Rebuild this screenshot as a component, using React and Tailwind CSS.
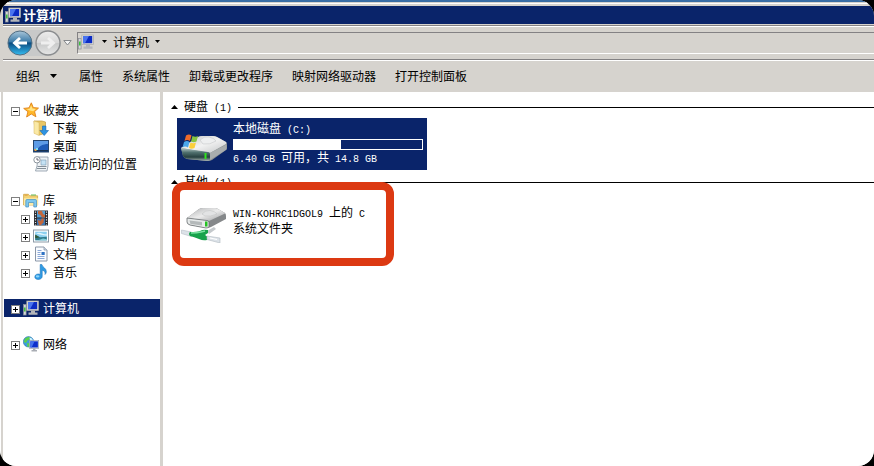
import { useState } from "react";

const ComputerIcon = () => (
  <svg viewBox="0 0 16 16" className="size-4 shrink-0">
    <rect x="0.5" y="4.5" width="2.600" height="10.500" fill="#d3d6d9" stroke="#8b8f96" strokeWidth="0.7" />
    <rect x="1" y="7.5" width="1.600" height="4" fill="#3fbf3f" />
    <rect x="3.800" y="1" width="11.700" height="9.5" fill="#dcdcd4" stroke="#a8aaa8" strokeWidth="0.7" />
    <rect x="5" y="2" width="9.2" height="7.2" fill="#0c2cc4" />
    <path d="M5 2h6L7 9.2H5z" fill="#4a74ee" />
    <path d="M8 10.5h4v2h2.5v2.300h-9V12.500H8z" fill="#b4b6ba" />
  </svg>
);

const StarIcon = () => (
  <svg viewBox="0 0 16 16" className="size-4 shrink-0">
    <path
      d="M8.3 0.8l2 4.8 5.2.5-3.9 3.5 1.3 5.2-4.6-2.8-4.7 3 1.3-5.3L.7 6.4l5.4-.6z"
      fill="#ffb82a"
      stroke="#e0821c"
      strokeWidth="0.9"
    />
    <path d="M8.1 3.2l1.3 3.3 3.4.4-2.6 2.3-3.4-.7-3.3-1.4 3.2-.4z" fill="#ffe487" />
  </svg>
);

const DownloadIcon = () => (
  <svg viewBox="0 0 16 16" className="size-4 shrink-0">
    <path d="M1 1h8l3.500 1v11l-6 2-4-2z" fill="#e8c666" stroke="#c39b3c" strokeWidth="0.7" />
    <path d="M1 1l5 1.500v13L1 13.3z" fill="#fae9a6" stroke="#d6b55c" strokeWidth="0.5" />
    <path d="M9.5 6h3.4v4.500h2.6l-4.3 5-4.3-5h2.6z" fill="#2e94e2" stroke="#1768b4" strokeWidth="0.6" />
  </svg>
);

const DesktopIcon = () => (
  <svg viewBox="0 0 16 16" className="size-4 shrink-0">
    <rect x="0.5" y="2.5" width="15" height="11.500" fill="#1f5cb8" stroke="#26466f" />
    <path d="M1 3h14v3C10 6 6 8 4 12H1z" fill="#5d9be6" />
    <rect x="1" y="12" width="14" height="1.5" fill="#18314f" />
    <rect x="1.5" y="11" width="2" height="2" fill="#f1a33c" />
    <rect x="3" y="10" width="2" height="2" fill="#7fe0f4" />
  </svg>
);

const RecentIcon = () => (
  <svg viewBox="0 0 16 16" className="size-4 shrink-0">
    <path d="M5 1h10v9l-1 5H2.500L4 10z" fill="#eef2f5" stroke="#8a98a5" strokeWidth="0.8" />
    <path d="M8 4h5v5H8z" fill="#c4e2f4" stroke="#7d9cb2" strokeWidth="0.6" />
    <path d="M4.5 10.5h9M4 12.5h9" stroke="#78848e" strokeWidth="0.9" />
    <circle cx="4" cy="3.8" r="3.2" fill="#fff" stroke="#8b949c" />
    <path d="M4 2v2h1.8" fill="none" stroke="#445" strokeWidth="0.8" />
  </svg>
);

const LibraryIcon = () => (
  <svg viewBox="0 0 16 16" className="size-4 shrink-0">
    <path d="M.6 13V2.3h4.8l1.2 1.5h8V13z" fill="#f3d375" stroke="#d0a444" strokeWidth="0.8" />
    <path d="M1.5 3.2h3.2" stroke="#e0a044" />
    <path d="M8 3h5" stroke="#65b84f" />
    <path d="M1 6.3h14V13H1z" fill="#fbeaa8" />
    <path d="M2.8 15V8.8Q2.8 7.5 4 7.5h8.2q1.3 0 1.3 1.3V15h-2.7v-4.5H5.5V15z" fill="#7ec7ee" stroke="#438fc4" strokeWidth="0.7" />
  </svg>
);

const VideoIcon = () => (
  <svg viewBox="0 0 16 16" className="size-4 shrink-0">
    <rect x="1" y="0.5" width="14" height="15" fill="#2b2b30" />
    <rect x="4" y="1" width="8" height="6.5" fill="#539fd6" />
    <rect x="4" y="8.5" width="8" height="6.5" fill="#3978b6" />
    <path d="M5 1h4l1 3 2 1v2.5H9L7.5 5 5 4zM4.5 10l3 1 1-2.5h2.5l-.5 4L8 15H6z" fill="#c4673a" />
    <path d="M2.5 1.5v14M13.5 1.5v14" stroke="#dfe3e6" strokeWidth="1.2" strokeDasharray="1.2 1.4" />
  </svg>
);

const PictureIcon = () => (
  <svg viewBox="0 0 16 16" className="size-4 shrink-0">
    <rect x="0.5" y="2" width="15" height="12" fill="#fff" stroke="#8d9ba8" />
    <rect x="2.2" y="3.7" width="11.6" height="8.6" fill="#8cd0f0" />
    <path d="M3 5.5q3-1.5 6 0t4.8.2v2L9 7z" fill="#e1f4fc" />
    <path d="M2.2 7.500l5 1.800 6.600-.5v3.500H2.2z" fill="#317c8c" />
    <path d="M2.2 6.500l4.600 2.800-4.600 1z" fill="#315a38" />
    <path d="M5 12.3l5-1.8 3.8.8v1z" fill="#84cfda" />
  </svg>
);

const DocumentIcon = () => (
  <svg viewBox="0 0 16 16" className="size-4 shrink-0">
    <path d="M2.500 1h8.500l3 3v11H2.500z" fill="#fafcff" stroke="#8b97a8" />
    <path d="M11 1v3h3" fill="#d0dae6" stroke="#8b97a8" strokeWidth="0.8" />
    <path d="M4.5 4.5h4M4.5 6.5h3M4.5 8.5h3M4.5 10.5h7M4.5 12.5h7" stroke="#8aa8d8" />
    <rect x="8.5" y="6" width="3.2" height="3" fill="#2e72c4" />
  </svg>
);

const MusicIcon = () => (
  <svg viewBox="0 0 16 16" className="size-4 shrink-0">
    <path
      d="M7.2.5h1.6c.4 2.6 4.7 3.6 4.5 7.3 0 1-.5 2-1.3 2.7.7-2.4-1-3.8-2.8-4.3v6.1c0 4-7.4 4.2-7.4.7 0-2.8 3.2-3.6 5.4-2.6z"
      fill="#2f9be4"
      stroke="#1f76bc"
      strokeWidth="0.6"
    />
    <ellipse cx="4.6" cy="12.4" rx="1.8" ry="1.1" fill="#8cd4fa" />
  </svg>
);

const NetworkIcon = () => (
  <svg viewBox="0 0 16 16" className="size-4 shrink-0">
    <circle cx="5.5" cy="5.8" r="5.2" fill="#3c9ce0" stroke="#2a72ac" strokeWidth="0.6" />
    <path d="M2 2.5L5.5.8l2 1-1.2 2-2 .6L3 7 .8 6zM4 7l3 .6-.5 3-2 .4z" fill="#5bd04e" />
    <path d="M6.5 1.5l2.5 1 1 2H7z" fill="#cdf3ff" />
    <rect x="6.5" y="4.5" width="9.2" height="7.8" fill="#dfe4ea" stroke="#8f98a4" strokeWidth="0.6" />
    <rect x="7.3" y="5.3" width="7.6" height="6.200" fill="#0e30cc" />
    <path d="M7.3 5.3h4.300l-3 6.200H7.3z" fill="#4472ec" />
    <path d="M10 12.500h2.4V14H14v1.5H8.5V14H10z" fill="#a9adb4" />
  </svg>
);

const LocalDriveIcon = () => (
  <svg viewBox="0 0 48 28" className="h-7 w-12 shrink-0">
    <defs>
      <linearGradient id="driveTop" x1="0" y1="0" x2="1" y2="1">
        <stop offset="0" stopColor="#c4c6c7" />
        <stop offset="0.5" stopColor="#f2f2f2" />
        <stop offset="1" stopColor="#c4c6c8" />
      </linearGradient>
      <linearGradient id="driveFront" x1="0" y1="0" x2="0" y2="1">
        <stop offset="0" stopColor="#b9cbc8" />
        <stop offset="0.35" stopColor="#4f6f6d" />
        <stop offset="0.7" stopColor="#27403f" />
        <stop offset="1" stopColor="#a9b6b4" />
      </linearGradient>
    </defs>
    <path d="M1 14L18 3q2-1 4-1h11q2 0 4 1l9 5q1 1 1 3v3q0 1-1 2L32 26q-2 1-4 1L7 25q-3-1-4-3z" fill="#8c9293" />
    <path d="M1 14L18 3q2-1 4-1h11q2 0 4 1l9 5q1 1 0 2L30 19z" fill="url(#driveTop)" />
    <path d="M1 14l27 4q2 0 2 2v6q-1 1-3 1L7 25q-3-1-4-3z" fill="url(#driveFront)" />
    <path d="M30 19l16.500-8.500v5L30 26z" fill="#a9adae" />
    <path d="M20 6q4-4 9-3t7 4q-6 4-13 3z" fill="#eeeff0" stroke="#c6c8ca" strokeWidth="0.6" />
    <rect x="24.500" y="19" width="2" height="6" fill="#2fe31c" />
    <path d="M6 1.500q3-2 5.500 0L10 7q-3-2-5.500 0z" fill="#ee6a2b" />
    <path d="M12.500 2q3 1.500 5.500 0L16.500 7.500q-3 1.500-5.500 0z" fill="#86c440" />
    <path d="M4 8q3-2 5.500 0L8 13.500q-3-2-5.500 0z" fill="#4aa6ec" />
    <path d="M10.500 8.500q3 1.500 5.500 0L14.500 14q-3 1.500-5.500 0z" fill="#fbcf3b" />
  </svg>
);

const NetworkDriveIcon = () => (
  <svg viewBox="0 0 48 36" className="h-9 w-12 shrink-0">
    <defs>
      <linearGradient id="netTop" x1="0" y1="0" x2="1" y2="1">
        <stop offset="0" stopColor="#aeb0b2" />
        <stop offset="0.5" stopColor="#ececec" />
        <stop offset="1" stopColor="#999b9d" />
      </linearGradient>
    </defs>
    <path d="M7 11L19 2q2-1 4-1h12q2 0 3 1l7 4q1 1 1 3v3L31 20q-2 1-4 1L10 18q-3-1-3-3z" fill="#85888a" />
    <path d="M7 11L19 2q2-1 4-1h12q2 0 3 1l7 4q0 1-1 1L29 14z" fill="url(#netTop)" />
    <path d="M7 11l20 2.500q2 0 2 2V20q-1 1-3 1l-16-3q-3-1-3-3z" fill="#e6e9e9" stroke="#6b7072" strokeWidth="0.8" />
    <path d="M9.500 13.500L22 15v3.500L10.500 17z" fill="#b4b9ba" />
    <path d="M22 7q3-4 8-3.500t7 3.500q-7 3-12 2z" fill="#e2e3e4" stroke="#bcbebf" strokeWidth="0.5" />
    <rect x="25" y="14.500" width="2.500" height="5" fill="#23c321" />
    <path d="M27 24l7-4 2 2-7 5z" fill="#c5c9cc" />
    <path d="M1.500 23l10 2v4.500L1.500 26.500z" fill="#dce2e8" stroke="#b6bec6" strokeWidth="0.6" />
    <path d="M10 25q7 0 10-1 3-2 8-1v3l-3 2 3 2-1 3q-4 1-8-1-5-2-9-3-2-2 0-4z" fill="#16a24b" />
    <path d="M11 26q6 0 10-1l4-1" fill="none" stroke="#79e2a0" strokeWidth="1.300" />
    <path d="M27 29l13 2v5l-13-3.500z" fill="#dce2e8" stroke="#b0b8c0" strokeWidth="0.6" />
    <path d="M30 31l7 1.500" stroke="#fff" strokeWidth="1.200" />
  </svg>
);

const DownArrow = ({ className }) => (
  <svg viewBox="0 0 7 4" preserveAspectRatio="none" className={className}>
    <path d="M0 0h7L3.500 4z" fill="currentColor" />
  </svg>
);

const NavButtons = () => (
  <div className="flex items-center rounded-full bg-[#c8c9c9]">
    <button aria-label="后退" className="size-[26px]">
      <svg viewBox="0 0 26 26">
        <defs>
          <linearGradient id="back" x1="0" y1="0" x2="0" y2="1">
            <stop offset="0" stopColor="#a9c6da" />
            <stop offset="0.45" stopColor="#3c7ba8" />
            <stop offset="0.5" stopColor="#0c4c80" />
            <stop offset="1" stopColor="#35bdf2" />
          </linearGradient>
        </defs>
        <circle cx="13" cy="13" r="12" fill="url(#back)" stroke="#537084" />
        <path d="M13 8l-5.500 5 5.500 5M8 13h12" fill="none" stroke="#fff" strokeWidth="2.800" />
      </svg>
    </button>
    <button aria-label="前进" className="ml-[2px] size-[26px]">
      <svg viewBox="0 0 26 26">
        <defs>
          <linearGradient id="forward" x1="0" y1="0" x2="0" y2="1">
            <stop offset="0" stopColor="#ededed" />
            <stop offset="0.48" stopColor="#d8d8d8" />
            <stop offset="0.52" stopColor="#c9caca" />
            <stop offset="1" stopColor="#e6e6e6" />
          </linearGradient>
        </defs>
        <circle cx="13" cy="13" r="12" fill="url(#forward)" stroke="#8b8d8f" strokeWidth="1.400" />
        <path d="M13 8l5.500 5-5.500 5M18 13H6" fill="none" stroke="#efefef" strokeWidth="2.800" />
      </svg>
    </button>
  </div>
);

const tree = [
  {
    name: "收藏夹",
    icon: StarIcon,
    children: [
      { name: "下载", icon: DownloadIcon },
      { name: "桌面", icon: DesktopIcon },
      { name: "最近访问的位置", icon: RecentIcon },
    ],
  },
  {
    name: "库",
    icon: LibraryIcon,
    children: [
      { name: "视频", icon: VideoIcon, expandable: true },
      { name: "图片", icon: PictureIcon, expandable: true },
      { name: "文档", icon: DocumentIcon, expandable: true },
      { name: "音乐", icon: MusicIcon, expandable: true },
    ],
  },
  { name: "计算机", icon: ComputerIcon, expandable: true },
  { name: "网络", icon: NetworkIcon, expandable: true },
];

const commands = ["属性", "系统属性", "卸载或更改程序", "映射网络驱动器", "打开控制面板"];

const Expander = ({ open, onClick, label }) => (
  <button aria-label={label} onClick={onClick} className="mt-[2px] size-[9px] shrink-0">
    <svg viewBox="0 0 9 9" shapeRendering="crispEdges" className="block size-[9px]">
      <rect x="0.5" y="0.5" width="8" height="8" fill="#fff" stroke="#808080" />
      <path d={open ? "M2 4.500h5" : "M2 4.500h5M4.500 2v5"} stroke="#000" />
    </svg>
  </button>
);

const TreeRow = ({ node, child, open, selected, onToggle, onSelect }) => {
  const Icon = node.icon;
  return (
    <div
      className={`flex h-[18px] items-center gap-[3px] ${child ? "pl-[17px]" : "pl-[7px]"} ${
        selected ? "bg-[#0a246a] text-white" : ""
      }`}
    >
      {node.children || node.expandable ? (
        <Expander open={open} onClick={onToggle} label={`展开 ${node.name}`} />
      ) : (
        <span className="w-[9px]" />
      )}
      <button onClick={onSelect} className="flex items-center gap-1 whitespace-nowrap">
        <Icon />
        {node.name}
      </button>
    </div>
  );
};

const Latin = ({ children }) => (
  <span className="font-['Liberation_Mono',monospace] text-[10px] whitespace-pre">{children}</span>
);

const GroupHeader = ({ name }) => (
  <h2 className="flex h-[18px] items-center">
    <svg viewBox="0 0 7 4" className="mr-[6px] h-1 w-[7px]">
      <path d="M0 4h7L3.500 0z" />
    </svg>
    <span>
      {name}
      <Latin>{" (1)"}</Latin>
    </span>
    <span className="mt-px ml-[6px] h-px flex-1 bg-black" />
  </h2>
);

const App = () => {
  const [selected, setSelected] = useState("计算机");
  const [open, setOpen] = useState({ 收藏夹: true, 库: true });
  const toggle = (name) => setOpen((prev) => ({ ...prev, [name]: !prev[name] }));

  return (
    <div className="flex min-h-screen bg-black font-['Noto_Sans_CJK_SC',sans-serif] text-[12px] leading-[18px] text-black">
      <div className="flex flex-1 flex-col overflow-hidden rounded-[16px] bg-[#d6d3ce]">
        <div className="h-[2px] bg-[#3a6ea5]" />
        <div className="mb-[2px] h-[2px] border-t border-[#d6d3ce] bg-white" />
        <header className="ml-[3px] flex h-[18px] items-center gap-[2px] bg-[#0a246a] pl-[2px] text-white">
          <ComputerIcon />
          <h1 className="text-[13px] font-bold">计算机</h1>
        </header>

        <nav className="mt-px ml-[3px] flex h-[35px] items-center border-y border-[#848284] pl-1 shadow-[inset_0_1px_#fff,0_1px_#fff]">
          <NavButtons />
          <button aria-label="最近浏览的位置" className="ml-[2px]">
            <svg viewBox="0 0 9 6" className="h-[6px] w-[9px]">
              <path d="M.8.5h7.400L4.500 5z" fill="#f4f4f4" stroke="#85888c" />
            </svg>
          </button>
          <div className="ml-[5px] flex h-[22px] flex-1 items-center border-y border-l border-t-[#848284] border-b-white border-l-[#848284] pb-[2px]">
            <ComputerIcon />
            <DownArrow className="mr-[6px] ml-2 h-[3px] w-[5px]" />
            <button className="flex items-center gap-[6px]">
              计算机
              <DownArrow className="h-[3px] w-[5px]" />
            </button>
          </div>
        </nav>

        <div className="mt-px flex h-[31px] items-center gap-[19px] pb-px pl-4 whitespace-nowrap">
          <button className="mr-[3px] flex items-center gap-[10px]">
            组织
            <DownArrow className="h-1 w-[7px]" />
          </button>
          {commands.map((name) => (
            <button key={name}>{name}</button>
          ))}
        </div>

        <div className="flex flex-1 border-l border-white pl-[2px]">
          <aside className="w-[157px] shrink-0 bg-white pt-[9px] pl-px">
            <ul className="flex flex-col gap-[18px]">
              {tree.map((node) => (
                <li key={node.name}>
                  <TreeRow
                    node={node}
                    open={open[node.name]}
                    selected={selected === node.name}
                    onToggle={() => toggle(node.name)}
                    onSelect={() => setSelected(node.name)}
                  />
                  {open[node.name] &&
                    node.children?.map((c) => (
                      <TreeRow
                        key={c.name}
                        node={c}
                        child
                        selected={selected === c.name}
                        onSelect={() => setSelected(c.name)}
                      />
                    ))}
                </li>
              ))}
            </ul>
          </aside>

          <main className="ml-[3px] flex-1 bg-white pt-[6px] pl-2">
            <section>
              <GroupHeader name="硬盘" />
              <button className="mt-[2px] ml-[6px] flex h-[52px] w-[250px] items-center gap-[5px] bg-[#0a246a] pr-1 pl-[3px] text-left text-white">
                <span className="pt-2">
                  <LocalDriveIcon />
                </span>
                <span className="flex flex-1 flex-col leading-[14px]">
                  <span>
                    本地磁盘<Latin>{" (C:)"}</Latin>
                  </span>
                  <span className="mt-px flex h-[11px] border border-white">
                    <span className="w-[57%] bg-white" />
                  </span>
                  <span>
                    <Latin>{"6.40 GB "}</Latin>可用，共<Latin>{" 14.8 GB"}</Latin>
                  </span>
                </span>
              </button>
            </section>

            <section className="mt-[3px]">
              <GroupHeader name="其他" />
              <div className="relative mt-[2px] ml-[6px] w-[250px]">
                <button className="flex h-[52px] w-full gap-[5px] pl-[3px] text-left">
                  <span className="pt-[14px]">
                    <NetworkDriveIcon />
                  </span>
                  <span className="flex flex-col pt-3 leading-[13px]">
                    <span>
                      <Latin>{"WIN-KOHRC1DGOL9 "}</Latin>上的<Latin>{" C"}</Latin>
                    </span>
                    <span>系统文件夹</span>
                  </span>
                </button>
                <div className="pointer-events-none absolute -top-[11px] -left-[5px] h-[84px] w-[222px] rounded-[12px] border-8 border-[#dc3912]" />
              </div>
            </section>
          </main>
        </div>
      </div>
    </div>
  );
};

export default App;
